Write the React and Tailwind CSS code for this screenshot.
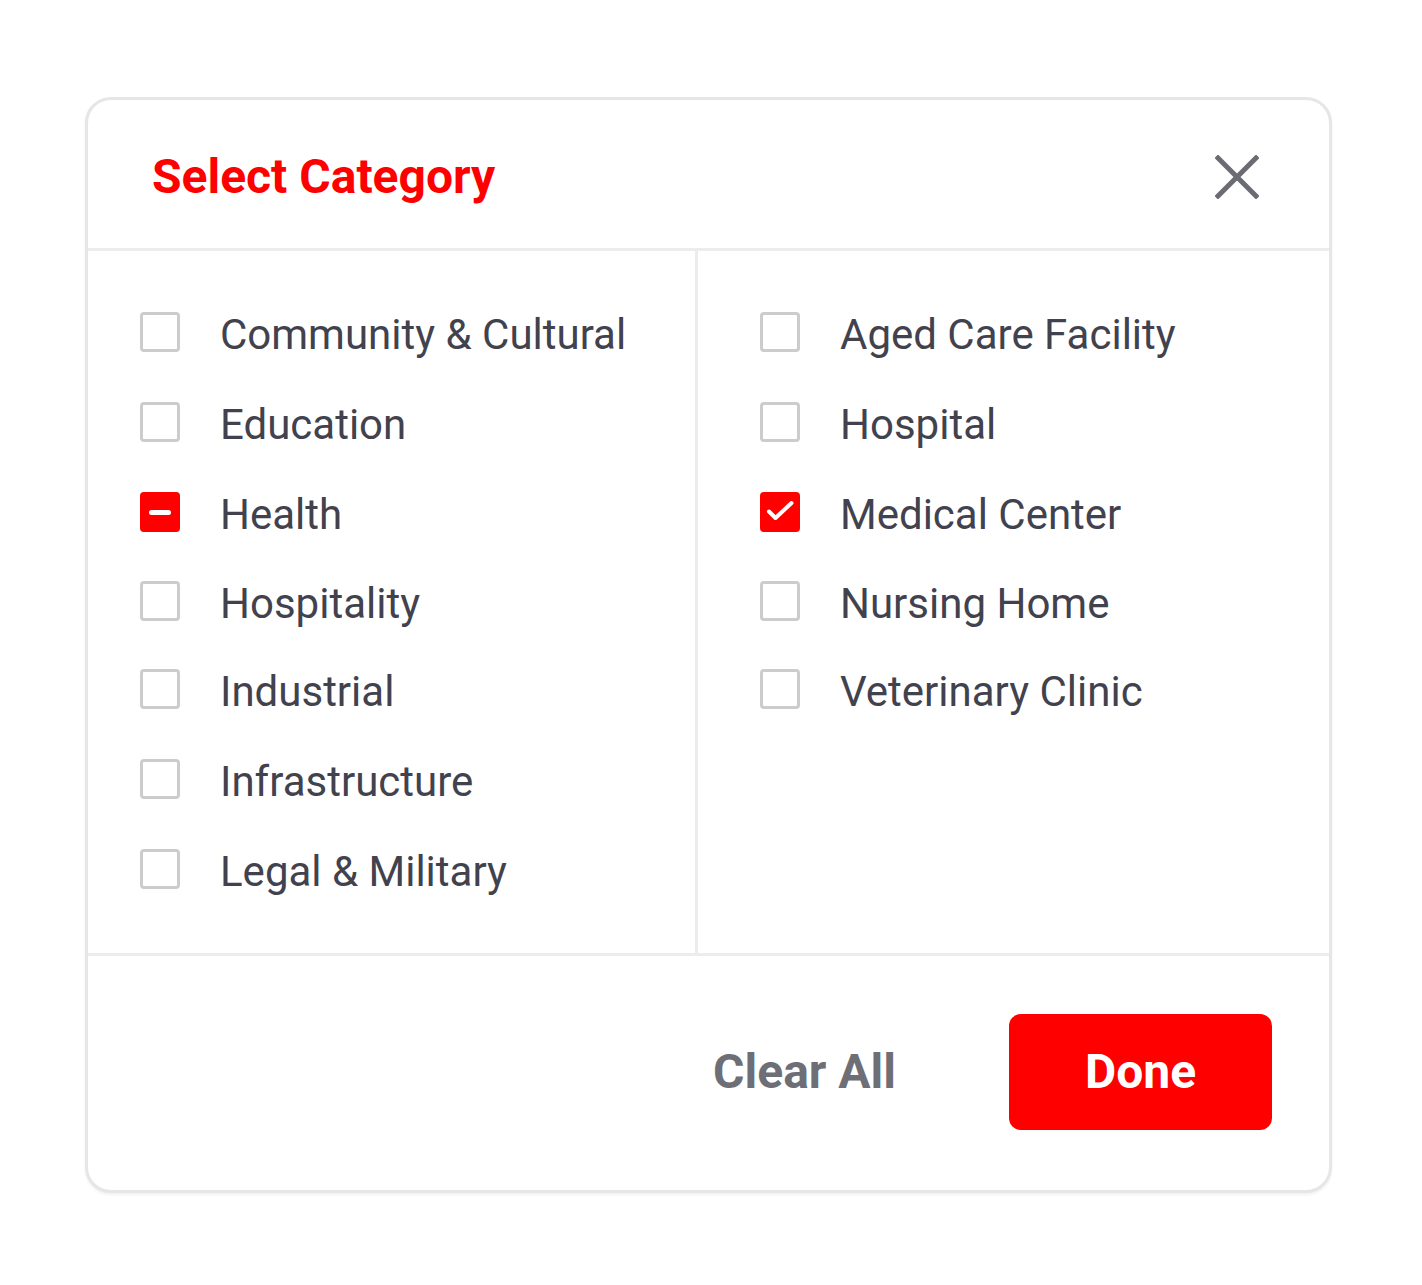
import React from 'react';

const left = [
  { label: 'Community & Cultural', state: 'off' },
  { label: 'Education', state: 'off' },
  { label: 'Health', state: 'partial' },
  { label: 'Hospitality', state: 'off' },
  { label: 'Industrial', state: 'off' },
  { label: 'Infrastructure', state: 'off' },
  { label: 'Legal & Military', state: 'off' },
];

const right = [
  { label: 'Aged Care Facility', state: 'off' },
  { label: 'Hospital', state: 'off' },
  { label: 'Medical Center', state: 'on' },
  { label: 'Nursing Home', state: 'off' },
  { label: 'Veterinary Clinic', state: 'off' },
];

const Box = ({ state }) => {
  if (state === 'on') {
    return (
      <div className="w-10 h-10 -mt-[6px] rounded-[4px] bg-[#ff0000] shrink-0">
        <svg width="40" height="40" viewBox="0 0 40 40" fill="none">
          <path d="M9 19.5l6.5 6.5L31.5 11" stroke="white" strokeWidth="4" strokeLinecap="round" strokeLinejoin="round" />
        </svg>
      </div>
    );
  }
  if (state === 'partial') {
    return (
      <div className="w-10 h-10 -mt-[6px] rounded-[4px] bg-[#ff0000] flex items-center justify-center shrink-0">
        <div className="w-[22px] h-[5px] rounded-full bg-white" />
      </div>
    );
  }
  return <div className="w-10 h-10 -mt-[6px] rounded-[4px] border-[3px] border-[#cccccc] bg-white shrink-0" />;
};

const Row = ({ item, h }) => (
  <div className={`flex items-center gap-[40px] ${h}`}>
    <Box state={item.state} />
    <span className="text-[42px] leading-none text-[#42424e]">{item.label}</span>
  </div>
);

const heights = ['h-[90px]', 'h-[90px]', 'h-[90px]', 'h-[87px]', 'h-[90px]', 'h-[90px]', 'h-[90px]'];

export default function App() {
  return (
    <div className="min-h-[1285px] bg-white pt-[97px] pl-[85px]" style={{ fontFamily: 'Roboto, "Noto Sans", sans-serif' }}>
      <div className="w-[1247px] rounded-[26px] border-[3px] border-[#e6e6e6] bg-white shadow-[0_2px_3px_rgba(0,0,0,0.06)] overflow-hidden">
        {/* Header */}
        <div className="h-[151px] flex items-center justify-between pl-[64px] pr-[70px] border-b-[3px] border-[#ececec]">
          <h2 className="text-[48px] font-bold text-[#ff0000] leading-none mt-[6px]">Select Category</h2>
          <svg width="44" height="44" viewBox="0 0 44 44" fill="none" className="mt-[6px]">
            <path d="M3 3l38 38M41 3L3 41" stroke="#6b6b73" strokeWidth="5" strokeLinecap="square" />
          </svg>
        </div>

        {/* Body */}
        <div className="flex h-[703px]">
          <div className="w-[610px] border-r-[3px] border-[#ececec] pl-[52px] pt-[39px]">
            {left.map((item, i) => (
              <Row key={item.label} item={item} h={heights[i]} />
            ))}
          </div>
          <div className="flex-1 pl-[62px] pt-[39px]">
            {right.map((item, i) => (
              <Row key={item.label} item={item} h={heights[i]} />
            ))}
          </div>
        </div>

        {/* Footer */}
        <div className="h-[237px] border-t-[3px] border-[#ececec] flex items-center justify-end pr-[57px] gap-[113px] -mt-[1px]">
          <button className="text-[48px] font-bold text-[#6e6e76] leading-none -mt-[2px]">Clear All</button>
          <button className="w-[263px] h-[116px] rounded-[12px] bg-[#ff0000] text-white text-[48px] font-bold leading-none -mt-[2px]">
            Done
          </button>
        </div>
      </div>
    </div>
  );
}
